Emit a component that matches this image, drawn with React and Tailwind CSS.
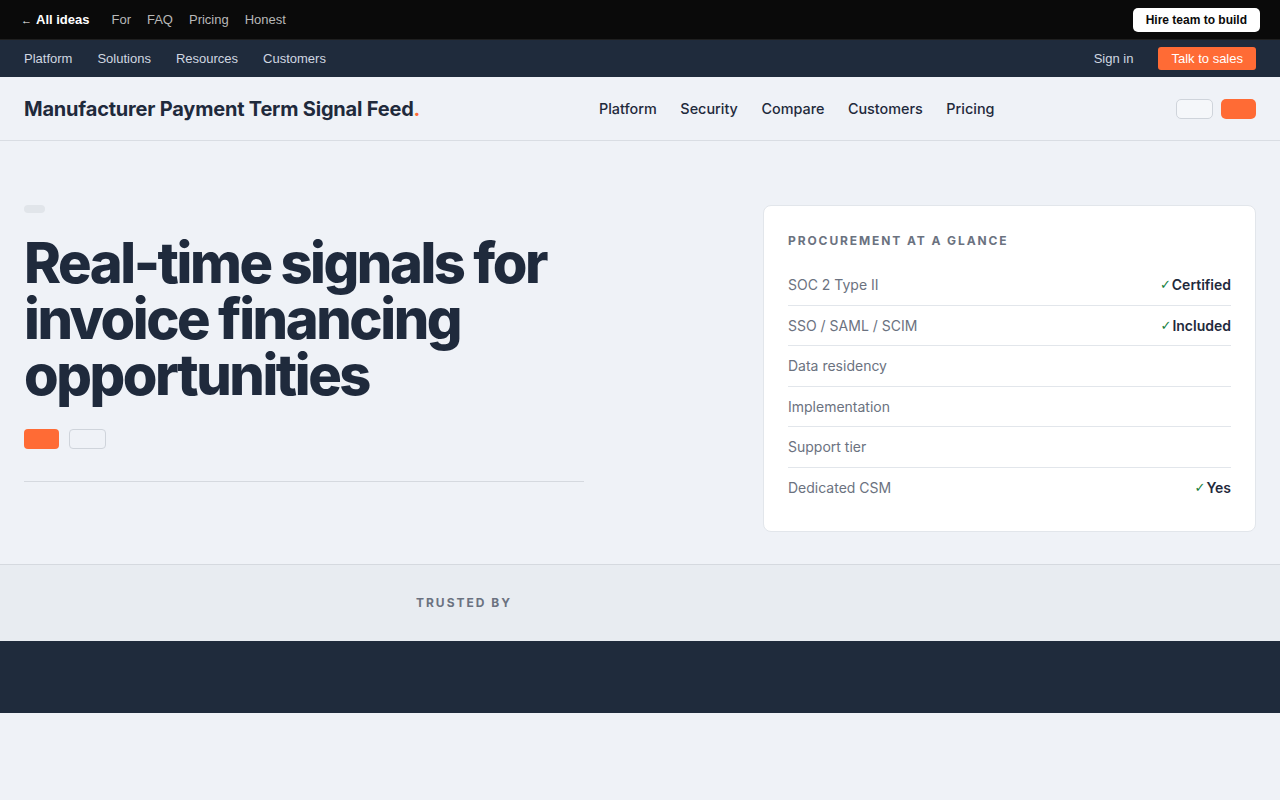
import React from "react";

const rows = [
  ["SOC 2 Type II", "Certified"],
  ["SSO / SAML / SCIM", "Included"],
  ["Data residency", null],
  ["Implementation", null],
  ["Support tier", null],
  ["Dedicated CSM", "Yes"],
];

export default function App() {
  return (
    <div className="min-h-[800px] bg-[#eff2f7]" style={{ fontFamily: "Inter, 'Noto Sans', sans-serif" }}>
      {/* top bar */}
      <div className="h-[40px] bg-[#0a0a0a] border-b border-[#1f1f1f] flex items-center justify-between pl-[21px] pr-[20px]" style={{ fontFamily: "'Liberation Sans', Arial, sans-serif" }}>
        <div className="flex items-center text-[13px]">
          <span className="text-white font-bold"><span className="text-[11px] font-normal mr-[4px]">←</span>All ideas</span>
          <span className="text-[#b8b8b8] ml-[22px]">For</span>
          <span className="text-[#b8b8b8] ml-[16px]">FAQ</span>
          <span className="text-[#b8b8b8] ml-[16px]">Pricing</span>
          <span className="text-[#b8b8b8] ml-[16px]">Honest</span>
        </div>
        <div className="h-[24px] px-[13px] bg-white rounded-[5px] flex items-center text-[12px] font-bold text-[#0a0a0a]">Hire team to build</div>
      </div>
      {/* second bar */}
      <div className="h-[37px] bg-[#1f2b3c] flex items-center justify-between px-[24px]" style={{ fontFamily: "'Liberation Sans', Arial, sans-serif" }}>
        <div className="flex items-center gap-[25px] text-[13px] text-[#d0d7e1]">
          <span>Platform</span>
          <span>Solutions</span>
          <span>Resources</span>
          <span>Customers</span>
        </div>
        <div className="flex items-center text-[13px]">
          <span className="text-[#d0d7e1] mr-[25px]">Sign in</span>
          <span className="h-[23px] px-[13px] bg-[#ff6b35] rounded-[3px] text-white flex items-center">Talk to sales</span>
        </div>
      </div>
      {/* header */}
      <div className="h-[64px] border-b border-[#d9dde3] flex items-center px-[24px]">
        <div className="text-[20px] font-bold text-[#1f2a3c] tracking-[-0.2px] w-[575px]">
          Manufacturer Payment Term Signal Feed<span className="text-[#ff6b35]">.</span>
        </div>
        <div className="flex items-center gap-[23.5px] text-[14.4px] font-medium text-[#1f2a3c]">
          <span>Platform</span>
          <span>Security</span>
          <span>Compare</span>
          <span>Customers</span>
          <span>Pricing</span>
        </div>
        <div className="ml-auto flex items-center gap-[8px]">
          <div className="w-[37px] h-[20px] rounded-[5px] border border-[#cfd4db] bg-[#f5f7fa]"></div>
          <div className="w-[35px] h-[20px] rounded-[5px] bg-[#ff6b35]"></div>
        </div>
      </div>
      {/* hero */}
      <div className="flex justify-between items-start px-[24px] pt-[64px] pb-[32px]">
        <div className="w-[560px]">
          <div className="w-[21px] h-[8px] rounded-full bg-[#e1e5ea]"></div>
          <h1 className="mt-[22px] text-[56px] leading-[56px] font-extrabold tracking-[-2.45px] text-[#1f2a3c]">
            Real-time signals for invoice financing opportunities
          </h1>
          <div className="mt-[26px] flex gap-[10px]">
            <div className="w-[35px] h-[20px] rounded-[4px] bg-[#ff6b35]"></div>
            <div className="w-[37px] h-[20px] rounded-[4px] border border-[#cfd4db]"></div>
          </div>
          <div className="mt-[32px] h-px bg-[#d5d9df]"></div>
        </div>
        <div className="w-[493px] bg-white rounded-[8px] border border-[#e2e6eb] px-[24px] pt-[26px] pb-[23px]">
          <div className="text-[12px] font-bold tracking-[1.9px] text-[#6b7280]">PROCUREMENT AT A GLANCE</div>
          <div className="mt-[15px]">
            {rows.map(([k, v], i) => (
              <div key={k} className={`h-[40.5px] flex items-center justify-between text-[14px] ${i < rows.length - 1 ? "border-b border-[#e2e6eb]" : ""}`}>
                <span className="text-[#6b7280]">{k}</span>
                {v && (
                  <span className="font-semibold text-[#1f2a3c] flex items-center">
                    <span className="text-[#15803d] text-[13px] font-bold mr-[1px] leading-none" style={{ fontFamily: "'DejaVu Sans', sans-serif" }}>✓</span>{v}
                  </span>
                )}
              </div>
            ))}
          </div>
        </div>
      </div>
      {/* trusted by */}
      <div className="h-[77px] bg-[#e8ecf1] border-t border-[#d5d9df] flex items-center">
        <div className="w-[928px] text-center text-[12px] font-bold tracking-[2px] text-[#6b7280]">TRUSTED BY</div>
      </div>
      <div className="h-[72px] bg-[#1f2b3c]"></div>
    </div>
  );
}
